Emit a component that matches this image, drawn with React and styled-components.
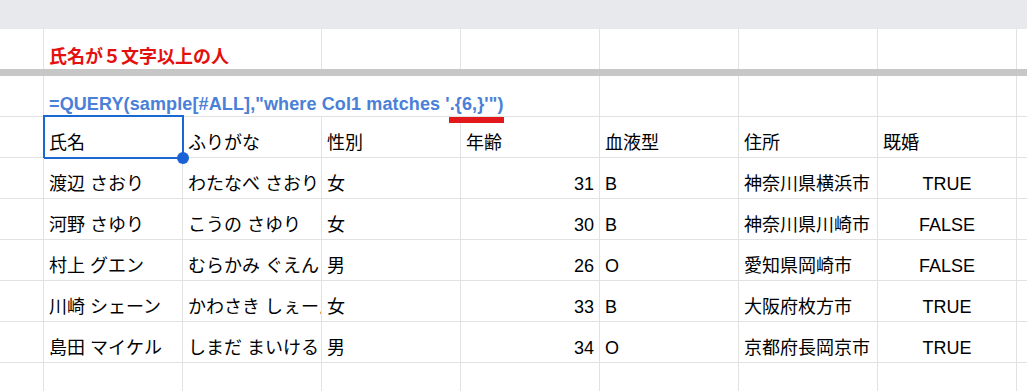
import React from 'react';
import styled, { createGlobalStyle } from 'styled-components';

const GlobalStyle = createGlobalStyle`
  html, body {
    margin: 0;
    padding: 0;
    background: #fff;
  }
  body {
    font-family: 'Liberation Sans', 'Noto Sans CJK JP', sans-serif;
    color: #000;
  }
`;

const COLS = [44, 139, 139, 139, 139, 139, 139, 139, 11];

const HEADERS = ['氏名', 'ふりがな', '性別', '年齢', '血液型', '住所', '既婚'];

const PEOPLE = [
  ['渡辺 さおり', 'わたなべ さおり', '女', 31, 'B', '神奈川県横浜市', 'TRUE'],
  ['河野 さゆり', 'こうの さゆり', '女', 30, 'B', '神奈川県川崎市', 'FALSE'],
  ['村上 グエン', 'むらかみ ぐえん', '男', 26, 'O', '愛知県岡崎市', 'FALSE'],
  ['川崎 シェーン', 'かわさき しぇーん', '女', 33, 'B', '大阪府枚方市', 'TRUE'],
  ['島田 マイケル', 'しまだ まいける', '男', 34, 'O', '京都府長岡京市', 'TRUE'],
];

export default function App() {
  return (
    <>
      <GlobalStyle />
      <Sheet>
        <TopBand />

        <Row $height={40} $noBorder>
          <Cell $w={COLS[0]} />
          <Cell $w={COLS[1] + COLS[2]}>
            <Title>氏名が５文字以上の人</Title>
          </Cell>
          {COLS.slice(3).map((w, i) => (
            <Cell key={i} $w={w} />
          ))}
        </Row>

        <FrozenDivider />

        <Row $height={41}>
          <Cell $w={COLS[0]} />
          <Cell $w={COLS[1] + COLS[2] + COLS[3] + COLS[4]} $overflow>
            <Formula>
              =QUERY(sample[#ALL],"where Col1 matches '
              <Marked>.{'{'}6,{'}'}'")</Marked>
            </Formula>
          </Cell>
          {COLS.slice(5).map((w, i) => (
            <Cell key={i} $w={w} />
          ))}
        </Row>

        <Row $height={41}>
          <Cell $w={COLS[0]} />
          {HEADERS.map((h, i) => (
            <Cell key={h} $w={COLS[i + 1]} $selected={i === 0}>
              {h}
              {i === 0 && <Handle />}
            </Cell>
          ))}
          <Cell $w={COLS[8]} />
        </Row>

        {PEOPLE.map((p) => (
          <Row key={p[0]} $height={41}>
            <Cell $w={COLS[0]} />
            {p.map((v, i) => (
              <Cell
                key={i}
                $w={COLS[i + 1]}
                $align={typeof v === 'number' ? 'right' : i === 6 ? 'center' : 'left'}
              >
                {v}
              </Cell>
            ))}
            <Cell $w={COLS[8]} />
          </Row>
        ))}

        <Row $height={40} $noBorder>
          {COLS.map((w, i) => (
            <Cell key={i} $w={w} />
          ))}
        </Row>
      </Sheet>
    </>
  );
}

const Sheet = styled.div`
  width: 1027px;
  height: 391px;
  overflow: hidden;
  background: #fff;
`;

const TopBand = styled.div`
  height: 29px;
  background: #e8e9ec;
`;

const FrozenDivider = styled.div`
  height: 7px;
  background: #c7c7c7;
`;

const Row = styled.div`
  display: flex;
  height: ${({ $height }) => $height}px;
  box-sizing: border-box;
  border-bottom: ${({ $noBorder }) => ($noBorder ? 'none' : '1px solid #e2e2e2')};
`;

const Cell = styled.div`
  position: relative;
  flex: 0 0 ${({ $w }) => $w}px;
  box-sizing: border-box;
  display: flex;
  align-items: flex-end;
  justify-content: ${({ $align }) =>
    $align === 'right' ? 'flex-end' : $align === 'center' ? 'center' : 'flex-start'};
  padding: 0 5px 2px 5px;
  border-right: 1px solid #e2e2e2;
  font-size: 18px;
  line-height: 24px;
  white-space: nowrap;
  overflow: ${({ $overflow }) => ($overflow ? 'visible' : 'hidden')};
  z-index: ${({ $overflow }) => ($overflow ? 3 : 'auto')};

  ${({ $selected }) =>
    $selected &&
    `
    overflow: visible;
    &::after {
      content: '';
      position: absolute;
      left: -1px;
      top: -2px;
      right: -2px;
      bottom: -2px;
      border: 2px solid #1a68d2;
      pointer-events: none;
    }
  `}
`;

const Handle = styled.span`
  position: absolute;
  right: -7px;
  bottom: -7px;
  width: 12px;
  height: 12px;
  border-radius: 50%;
  background: #1a62d6;
  z-index: 2;
`;

const Title = styled.span`
  color: #e3100f;
  font-weight: 700;
  font-size: 18px;
  margin-bottom: -2px;
`;

const Formula = styled.span`
  color: #4a80d8;
  font-weight: 700;
  font-size: 18px;
  letter-spacing: 0.12px;
  margin-bottom: -2px;
`;

const Marked = styled.span`
  position: relative;

  &::after {
    content: '';
    position: absolute;
    left: -1px;
    right: 0;
    bottom: -9px;
    height: 6px;
    background: #e2181b;
  }
`;
